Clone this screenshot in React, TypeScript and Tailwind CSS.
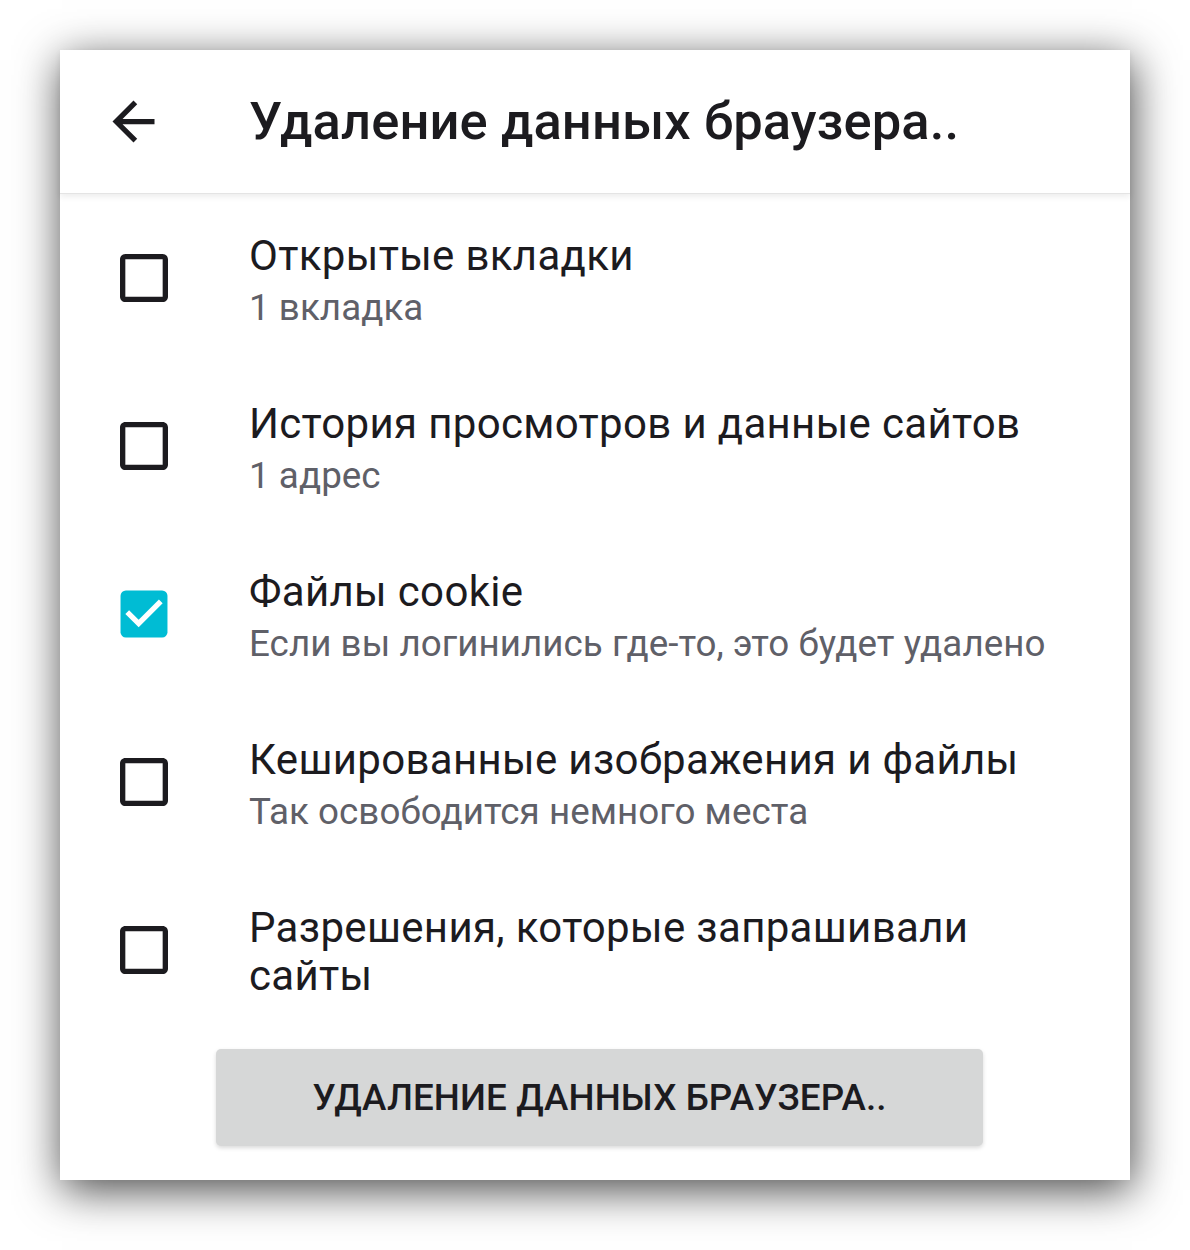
import React from "react";

const Blank = () => (
  <svg viewBox="0 0 24 24" className="w-[64px] h-[64px] shrink-0" fill="#1c1b1f">
    <path d="M19 5v14H5V5h14m0-2H5c-1.1 0-2 .9-2 2v14c0 1.1.9 2 2 2h14c1.1 0 2-.9 2-2V5c0-1.1-.9-2-2-2z" />
  </svg>
);

const Checked = () => (
  <svg viewBox="0 0 24 24" className="w-[64px] h-[64px] shrink-0">
    <rect x="3.2" y="3.2" width="17.6" height="17.6" rx="2" fill="#00bcd4" />
    <path d="M10 17l-5-5 1.41-1.41L10 14.17l7.59-7.59L19 8l-9 9z" fill="#ffffff" />
  </svg>
);

type Item = { title: string; sub?: string; checked?: boolean };

const items: Item[] = [
  { title: "Открытые вкладки", sub: "1 вкладка" },
  { title: "История просмотров и данные сайтов", sub: "1 адрес" },
  { title: "Файлы cookie", sub: "Если вы логинились где-то, это будет удалено", checked: true },
  { title: "Кешированные изображения и файлы", sub: "Так освободится немного места" },
  { title: "Разрешения, которые запрашивали сайты" },
];

export default function App() {
  return (
    <div className="min-h-[1250px] bg-white pt-[50px] pl-[60px] font-['Roboto',sans-serif]">
      <div className="w-[1070px] h-[1130px] bg-white shadow-[2px_10px_42px_rgba(0,0,0,0.72)] flex flex-col">
        <div className="h-[144px] shrink-0 flex items-center pl-[42px] border-b border-[#e4e4e4] shadow-[0_3px_6px_rgba(0,0,0,0.07)] relative z-10">
          <svg viewBox="0 0 24 24" className="w-[63px] h-[63px] shrink-0" fill="#1c1b1f">
            <path d="M20 11H7.83l5.59-5.59L12 4l-8 8 8 8 1.41-1.41L7.83 13H20v-2z" />
          </svg>
          <div className="ml-[84px] text-[52.5px] font-medium text-[#1c1b1f] tracking-[0.1px] whitespace-nowrap">
            Удаление данных браузера..
          </div>
        </div>
        <div className="flex flex-col">
          {items.map((it, i) => (
            <div key={i} className="h-[168px] flex items-center pl-[52px]">
              {it.checked ? <Checked /> : <Blank />}
              <div className={`ml-[73px] flex flex-col ${it.sub ? "pt-[9px]" : "pt-[4px] pr-[120px]"}`}>
                <div className="text-[42px] leading-[48px] text-[#1c1b1f] tracking-[0.33px]">{it.title}</div>
                {it.sub && (
                  <div className="mt-[2px] text-[36.75px] leading-[52px] text-[#5f6068] tracking-[0.05px]">{it.sub}</div>
                )}
              </div>
            </div>
          ))}
        </div>
        <div className="mt-[15px] ml-[156px] w-[767px] h-[97px] rounded-[5px] bg-[#d6d7d7] shadow-[0_2px_4px_rgba(0,0,0,0.15)] flex items-center justify-center">
          <span className="text-[36.75px] font-medium text-[#1c1b1f] tracking-[0.1px] uppercase">
            Удаление данных браузера..
          </span>
        </div>
      </div>
    </div>
  );
}
